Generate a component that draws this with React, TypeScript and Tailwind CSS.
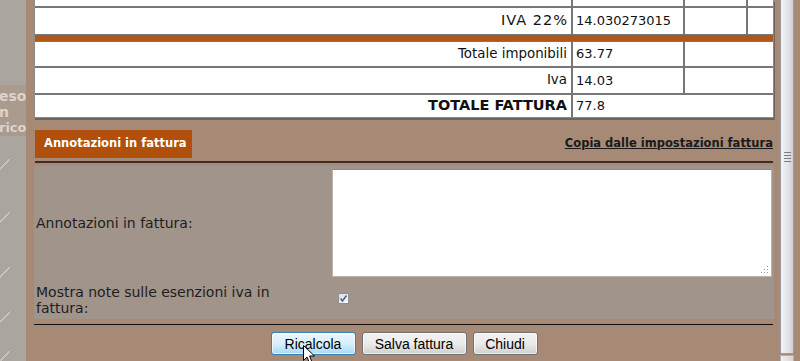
import React from "react";

const Pencil = () => (
  <svg width="14" height="14" viewBox="0 0 14 14" className="block">
    <path d="M-2 13 L9 2 L11 4 L0 15 Z" fill="#c4bfba" stroke="#9d9690" strokeWidth="0.7" />
    <path d="M9 2 L10.5 0.5 L12.5 2.5 L11 4 Z" fill="#b8b2ad" stroke="#9d9690" strokeWidth="0.6" />
  </svg>
);

const Cell = ({
  children,
  className = "",
}: {
  children?: React.ReactNode;
  className?: string;
}) => <div className={"flex items-center h-full " + className}>{children}</div>;

export default function App() {
  const font = { fontFamily: '"DejaVu Sans", Verdana, sans-serif' };
  return (
    <div
      className="relative w-[800px] h-[361px] overflow-hidden flex bg-[#a68a76] text-[#111]"
      style={font}
    >
      {/* left dimmed strip */}
      <div className="w-[26px] shrink-0 h-full bg-[#aaa59f] flex flex-col overflow-hidden">
        <div className="mt-[85px] h-[54px] bg-[#ab9a8e] text-[#ddd3cb] text-[14px] leading-[16px] font-bold pt-[3px] whitespace-nowrap">
          <div className="-ml-[1px]">eso</div>
          <div className="-ml-[1px]">n</div>
          <div className="-ml-[1px] text-[13px]">rico</div>
        </div>
        <div className="mt-[20px]">
          <Pencil />
        </div>
        <div className="mt-[39px]">
          <Pencil />
        </div>
        <div className="mt-[41px]">
          <Pencil />
        </div>
        <div className="mt-[31px]">
          <Pencil />
        </div>
        <div className="mt-[25px]">
          <Pencil />
        </div>
      </div>

      {/* dialog content */}
      <div className="w-[754px] shrink-0 pl-[8px] pr-[6px] flex flex-col">
        {/* totals table */}
        <div className="w-[740px] bg-white border border-t-0 border-[#8a8a8a] shadow-[1px_2px_0_#6f625a] text-[13.4px]">
          <div className="flex h-[8px] border-b-2 border-[#777]">
            <Cell className="w-[538px] border-r-2 border-[#777]" />
            <Cell className="w-[112px] border-r-2 border-[#777]" />
            <Cell className="w-[63px] border-r-2 border-[#777]" />
            <Cell className="flex-1" />
          </div>
          <div className="flex h-[26px]">
            <Cell className="w-[538px] border-r-2 border-[#777] justify-end pr-[3px] text-[14.5px] tracking-[1px]">IVA 22%</Cell>
            <Cell className="w-[112px] border-r-2 border-[#777] pl-[3px] text-[13px]">14.030273015</Cell>
            <Cell className="w-[63px] border-r-2 border-[#777]" />
            <Cell className="flex-1" />
          </div>
          <div className="h-[8px] bg-[#b0581c] border-y border-[#777]" />
          <div className="flex h-[26px] border-b-2 border-[#777]">
            <Cell className="w-[538px] border-r-2 border-[#777] justify-end pr-[4px]">Totale imponibili</Cell>
            <Cell className="w-[112px] border-r-2 border-[#777] pl-[3px] text-[13px]">63.77</Cell>
            <Cell className="flex-1" />
          </div>
          <div className="flex h-[27px] border-b-2 border-[#777]">
            <Cell className="w-[538px] border-r-2 border-[#777] justify-end pr-[4px]">Iva</Cell>
            <Cell className="w-[112px] border-r-2 border-[#777] pl-[3px] text-[13px]">14.03</Cell>
            <Cell className="flex-1" />
          </div>
          <div className="flex h-[22px]">
            <Cell className="w-[538px] border-r-2 border-[#777] justify-end pr-[4px] font-bold text-[14.5px]">TOTALE FATTURA</Cell>
            <Cell className="flex-1 pl-[3px] text-[13px]">77.8</Cell>
          </div>
        </div>

        {/* tab header */}
        <div className="mt-[12px] h-[28px] flex items-center justify-between pr-[1px]">
          <div className="ml-[1px] w-[157px] h-full bg-[#b0500c] text-white font-bold text-[11.5px] flex items-center pl-[9px]">
            Annotazioni in fattura
          </div>
          <a className="font-bold text-[11.5px] text-[#1a1a1a] underline cursor-pointer">
            Copia dalle impostazioni fattura
          </a>
        </div>
        <div className="mt-[3px] h-[2px] w-[738px] ml-[1px] bg-[#3a2d26]" />

        {/* form panel */}
        <div className="mt-[3px] w-[740px] bg-[#a0948b] pt-[3px] pb-[3px] text-[14px] text-[#1e1e1e]">
          <div className="flex">
            <div className="w-[298px] flex items-center pl-[2px]">Annotazioni in fattura:</div>
            <div className="relative w-[440px] h-[108px] bg-white border border-[#b9b2ad] border-t-[#8d8680]">
              <svg width="8" height="8" viewBox="0 0 8 8" className="absolute right-[2px] bottom-[2px]">
                <rect x="6" y="0" width="1" height="1" fill="#9a9a9a" />
                <rect x="3" y="3" width="1" height="1" fill="#9a9a9a" />
                <rect x="6" y="3" width="1" height="1" fill="#9a9a9a" />
                <rect x="0" y="6" width="1" height="1" fill="#9a9a9a" />
                <rect x="3" y="6" width="1" height="1" fill="#9a9a9a" />
                <rect x="6" y="6" width="1" height="1" fill="#9a9a9a" />
              </svg>
            </div>
          </div>
          <div className="flex mt-[7px]">
            <div className="w-[298px] pl-[2px] leading-[16px]">
              Mostra note sulle esenzioni iva in
              <br />
              fattura:
            </div>
            <div className="ml-[6px] mt-[9px] w-[11px] h-[11px] border border-[#8e8f8f] bg-gradient-to-br from-[#dcdcdc] to-[#fbfbfb] flex items-center justify-center">
              <svg width="9" height="9" viewBox="0 0 9 9">
                <path d="M1.5 4.5 L3.5 7 L7.5 1.5" fill="none" stroke="#4c61a8" strokeWidth="1.6" />
              </svg>
            </div>
          </div>
        </div>

        <div className="mt-[5px] h-px w-[739px] bg-[#111]" />

        {/* buttons */}
        <div
          className="mt-[7px] w-[740px] flex justify-center gap-[6px] text-[14px] text-black"
          style={{ fontFamily: '"Liberation Sans", Arial, sans-serif' }}
        >
          <button className="w-[85px] h-[23px] rounded-[3px] border border-[#3c7fb1] bg-gradient-to-b from-[#eaf6fd] via-[#d9f0fc] to-[#a7d9f5] shadow-[inset_0_0_0_1px_#ffffffaa] leading-none">
            Ricalcola
          </button>
          <button className="w-[105px] h-[23px] rounded-[3px] border border-[#707070] bg-gradient-to-b from-[#f2f2f2] via-[#ebebeb] to-[#cfcfcf] shadow-[inset_0_0_0_1px_#ffffffaa] leading-none">
            Salva fattura
          </button>
          <button className="w-[65px] h-[23px] rounded-[3px] border border-[#707070] bg-gradient-to-b from-[#f2f2f2] via-[#ebebeb] to-[#cfcfcf] shadow-[inset_0_0_0_1px_#ffffffaa] leading-none">
            Chiudi
          </button>
        </div>
      </div>

      {/* scrollbar */}
      <div className="w-[14px] shrink-0 flex flex-col">
        <div className="h-[355px] rounded-b-[2px] border border-t-0 border-[#9a9aa2] bg-gradient-to-r from-[#f3f3f5] via-[#e6e6ea] to-[#cfcfd6] flex items-start justify-center">
          <div className="mt-[152px] flex flex-col gap-[2px] w-[7px]">
            <div className="h-px bg-[#7c7c84]" />
            <div className="h-px bg-[#7c7c84]" />
            <div className="h-px bg-[#7c7c84]" />
            <div className="h-px bg-[#7c7c84]" />
          </div>
        </div>
        <div className="mt-[1px] h-[6px] bg-gradient-to-r from-[#efefef] to-[#d6d6da] border border-b-0 border-[#b0b0b6]" />
      </div>

      {/* mouse cursor */}
      <svg
        width="14"
        height="20"
        viewBox="0 0 14 20"
        className="absolute left-[303px] top-[345px] pointer-events-none"
      >
        <path
          d="M0.5 0.5 L0.5 15.5 L4 12 L6.5 18 L9 17 L6.5 11 L11.5 11 Z"
          fill="white"
          stroke="black"
          strokeWidth="1"
          strokeLinejoin="round"
        />
      </svg>
    </div>
  );
}
